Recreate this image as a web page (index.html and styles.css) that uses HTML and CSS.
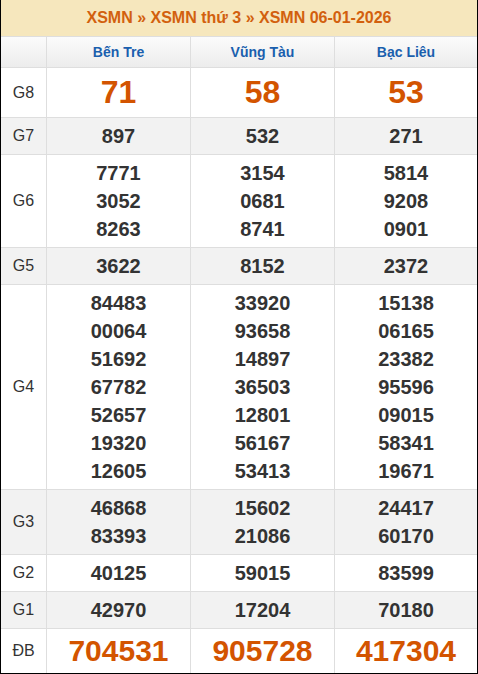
FILE: index.html
```html
<!DOCTYPE html>
<html lang="vi">
<head>
<meta charset="utf-8">
<title>XSMN 06-01-2026</title>
<link rel="stylesheet" href="styles.css">
</head>
<body>
<div class="frame">
  <div class="kq">
    <div class="title">XSMN » XSMN thứ 3 » XSMN 06-01-2026</div>

    <div class="hd"></div>
    <div class="hd prov">Bến Tre</div>
    <div class="hd prov">Vũng Tàu</div>
    <div class="hd prov">Bạc Liêu</div>

    <div class="lbl">G8</div>
    <div class="c big">71</div>
    <div class="c big">58</div>
    <div class="c big">53</div>

    <div class="lbl alt">G7</div>
    <div class="c alt">897</div>
    <div class="c alt">532</div>
    <div class="c alt">271</div>

    <div class="lbl">G6</div>
    <div class="c"><div>7771</div><div>3052</div><div>8263</div></div>
    <div class="c"><div>3154</div><div>0681</div><div>8741</div></div>
    <div class="c"><div>5814</div><div>9208</div><div>0901</div></div>

    <div class="lbl alt">G5</div>
    <div class="c alt">3622</div>
    <div class="c alt">8152</div>
    <div class="c alt">2372</div>

    <div class="lbl">G4</div>
    <div class="c"><div>84483</div><div>00064</div><div>51692</div><div>67782</div><div>52657</div><div>19320</div><div>12605</div></div>
    <div class="c"><div>33920</div><div>93658</div><div>14897</div><div>36503</div><div>12801</div><div>56167</div><div>53413</div></div>
    <div class="c"><div>15138</div><div>06165</div><div>23382</div><div>95596</div><div>09015</div><div>58341</div><div>19671</div></div>

    <div class="lbl alt">G3</div>
    <div class="c alt"><div>46868</div><div>83393</div></div>
    <div class="c alt"><div>15602</div><div>21086</div></div>
    <div class="c alt"><div>24417</div><div>60170</div></div>

    <div class="lbl">G2</div>
    <div class="c">40125</div>
    <div class="c">59015</div>
    <div class="c">83599</div>

    <div class="lbl alt">G1</div>
    <div class="c alt">42970</div>
    <div class="c alt">17204</div>
    <div class="c alt">70180</div>

    <div class="lbl">ĐB</div>
    <div class="c db">704531</div>
    <div class="c db">905728</div>
    <div class="c db">417304</div>
  </div>
</div>
</body>
</html>
```

FILE: styles.css
```css
html, body {
  margin: 0;
  padding: 0;
  background: #fff;
}

body {
  font-family: "Liberation Sans", Arial, sans-serif;
  color: #333;
}

.frame {
  width: 476px;
  border: 1px solid #000;
  border-top: 0;
}

.kq {
  display: grid;
  grid-template-columns: 45px 143px 143px 142px;
  gap: 1px;
  background: #dedede;
}

.title {
  grid-column: 1 / -1;
  height: 36px;
  line-height: 36px;
  background: #f6e7bd;
  color: #d2600e;
  font-weight: bold;
  font-size: 16px;
  text-align: center;
}

.hd {
  height: 30px;
  line-height: 30px;
  background: linear-gradient(#fbfbfb, #ececec);
}

.prov {
  color: #1a5fae;
  font-weight: bold;
  font-size: 14px;
  text-align: center;
}

.lbl {
  background: #fff;
  font-size: 16px;
  color: #333;
  display: flex;
  align-items: center;
  justify-content: center;
}

.c {
  background: #fff;
  padding: 4px 0;
  line-height: 28px;
  font-size: 20px;
  font-weight: bold;
  text-align: center;
  color: #333;
}

.alt {
  background: #f2f2f2;
}

.big {
  font-size: 32px;
  line-height: 41px;
  color: #d35400;
}

.db {
  font-size: 30px;
  line-height: 36px;
  color: #d35400;
}
```
